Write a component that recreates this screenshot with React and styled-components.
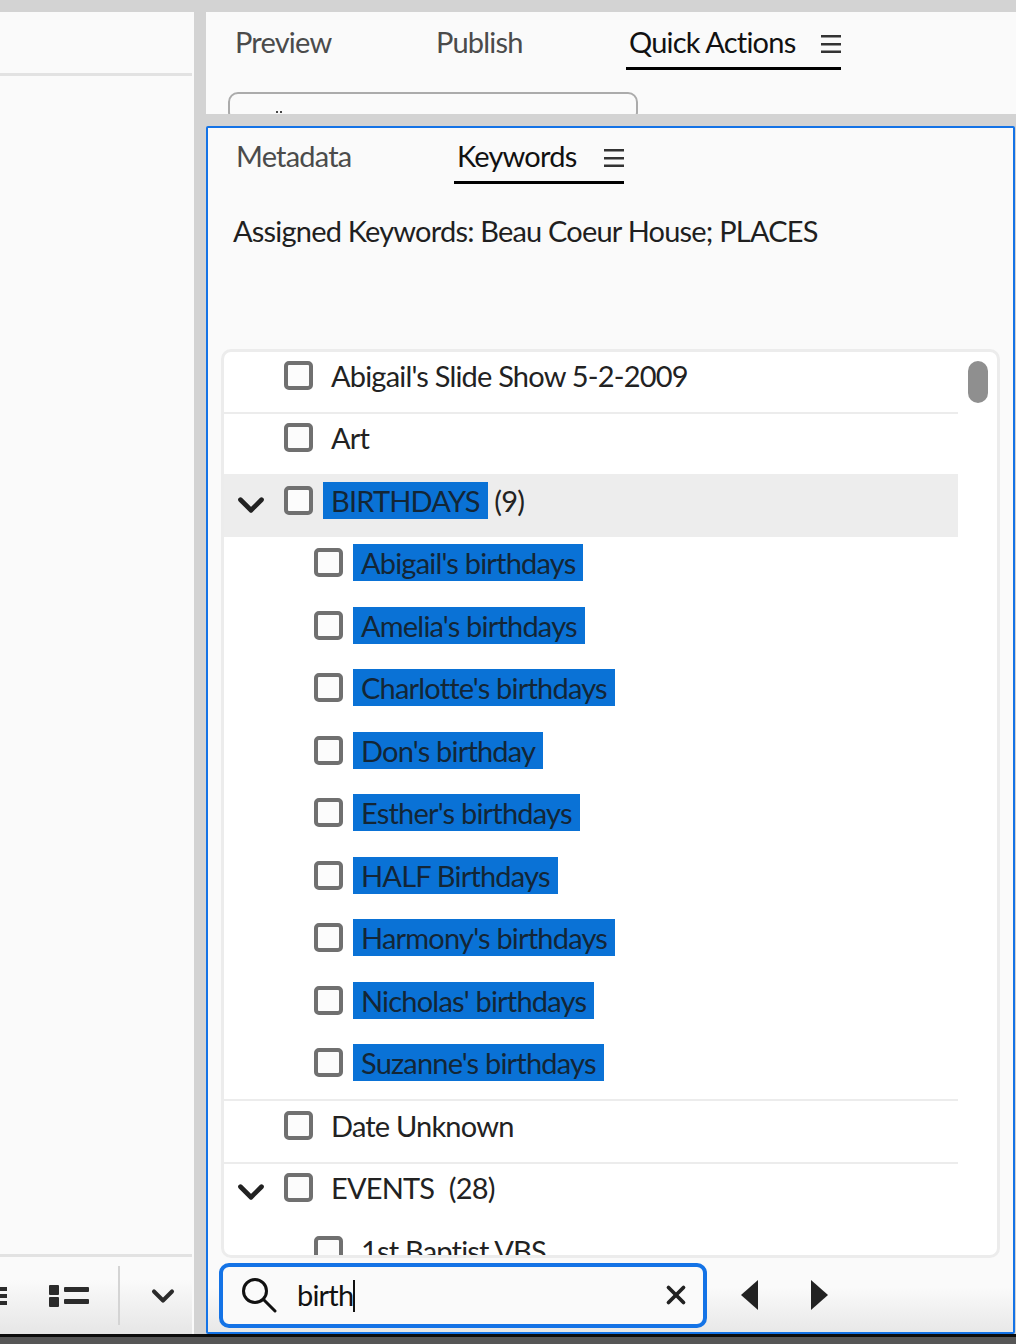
import styled, { createGlobalStyle } from "styled-components";
import { X, ChevronDown } from "lucide-react";

const Global = createGlobalStyle`
  html, body { margin: 0; padding: 0; height: 100%; overflow: hidden; }
  body { background: #d3d3d3; font-family: "Lato", "Noto Sans", sans-serif; letter-spacing: -0.8px; }
  * { box-sizing: border-box; }
`;

const Page = styled.div`
  width: 1016px;
  height: 1344px;
  display: flex;
  flex-direction: column;
  padding-top: 12px;
  overflow: hidden;
`;

const Columns = styled.div`
  height: 1322px;
  display: flex;
  gap: 12px;
`;

const LeftPanel = styled.div`
  width: 194px;
  display: flex;
  flex-direction: column;
  background: #fafafa;
`;

const LeftHeader = styled.div`
  height: 64px;
  margin-right: 2px;
  border-bottom: 3px solid #e2e2e2;
`;

const LeftBody = styled.div`
  flex: 1;
`;

const Toolbar = styled.div`
  height: 80px;
  margin-right: 2px;
  border-top: 3px solid #e2e2e2;
  background: linear-gradient(#fafafa 30%, #e6e6e6);
  display: flex;
  align-items: center;
  padding-left: 49px;
  position: relative;
`;

const CutIcon = styled.svg`
  position: absolute;
  left: 0;
  top: 29px;
`;

const ToolDivider = styled.div`
  width: 2px;
  height: 59px;
  margin: 0 25px 0 29px;
  background: #d4d4d4;
`;

const RightColumn = styled.div`
  flex: 1;
  display: flex;
  flex-direction: column;
  gap: 12px;
`;

const TopPanel = styled.div`
  height: 102px;
  background: #fafafa;
  overflow: hidden;
`;

const TabRow = styled.div`
  display: flex;
  align-items: flex-start;
  height: ${(p) => p.$height}px;
  padding-left: ${(p) => p.$left}px;
  padding-top: ${(p) => p.$top}px;
`;

const Tab = styled.div`
  width: ${(p) => p.$width}px;
  height: 100%;
  padding-left: ${(p) => (p.$active ? 3 : 0)}px;
  display: flex;
  justify-content: space-between;
  font-size: 29px;
  line-height: 36px;
  color: ${(p) => (p.$active ? "#111" : "#4b4b4b")};
  border-bottom: ${(p) => (p.$active ? "3px solid #000" : "none")};
`;

const MenuIcon = styled.svg`
  margin-top: 11px;
  flex: none;
`;

const ClippedBox = styled.div`
  position: relative;
  width: 410px;
  height: 30px;
  margin-left: 22px;
  margin-top: 22px;
  border: 2px solid #ababab;
  border-radius: 10px;
  &::after {
    content: "";
    position: absolute;
    left: 46px;
    top: 17px;
    width: 6px;
    height: 2px;
    background: repeating-linear-gradient(90deg, #444 0 2px, transparent 2px 4px);
  }
`;

const KeywordPanel = styled.div`
  flex: 1;
  position: relative;
  margin-right: 1px;
  border: 2px solid #1473e6;
  border-radius: 2px;
  background: #fafafa;
  display: flex;
  flex-direction: column;
`;

const Assigned = styled.div`
  height: 165px;
  padding: 29px 0 0 25px;
  font-size: 29px;
  line-height: 36px;
  color: #1f1f1f;
`;

const ListFrame = styled.div`
  position: relative;
  height: 909px;
  margin: 0 13px;
  border: 3px solid #ececec;
  border-radius: 10px;
  background: #fff;
  overflow: hidden;
`;

const Rows = styled.div`
  width: 734px;
  margin-top: -3px;
`;

const Row = styled.div`
  display: flex;
  align-items: center;
  height: 62.5px;
  padding-bottom: 10px;
  background: ${(p) => (p.$active ? "#ededed" : "transparent")};
  box-shadow: ${(p) => (p.$line ? "0 2px 0 #ececec" : "none")};
  font-size: 29px;
  color: #222;
`;

const Twisty = styled.div`
  width: ${(p) => (p.$child ? 90 : 60)}px;
  flex: none;
  display: flex;
  padding: 9px 0 0 6px;
`;

const Checkbox = styled.div`
  width: 29px;
  height: 29px;
  flex: none;
  border: 4px solid #707070;
  border-radius: 5px;
  background: #fcfcfc;
`;

const Label = styled.span`
  margin-left: 10px;
  padding: 0 8px;
  height: 37px;
  line-height: 37px;
  white-space: pre;
  background: ${(p) => (p.$hit ? "#0a72d6" : "transparent")};
  color: ${(p) => (p.$hit ? "#132636" : "#222")};
`;

const Count = styled.span`
  line-height: 37px;
  white-space: pre;
`;

const ScrollThumb = styled.div`
  position: absolute;
  top: 9px;
  right: 9px;
  width: 20px;
  height: 42px;
  border-radius: 10px;
  background: #8f8f8f;
`;

const Footer = styled.div`
  flex: 1;
  display: flex;
  align-items: center;
  padding: 0 11px;
  background: linear-gradient(#fafafa 40%, #e8e8e8);
`;

const SearchBox = styled.div`
  width: 488px;
  height: 65px;
  display: flex;
  align-items: center;
  padding: 0 12px 0 18px;
  border: 4px solid #1473e6;
  border-radius: 10px;
  background: #fafafa;
`;

const SearchText = styled.div`
  flex: 1;
  margin-left: 20px;
  font-size: 29px;
  line-height: 38px;
  color: #111;
`;

const Caret = styled.span`
  display: inline-block;
  width: 2px;
  height: 32px;
  vertical-align: -6px;
  background: #111;
`;

const ArrowButton = styled.svg`
  flex: none;
  margin-left: ${(p) => p.$gap}px;
`;

const BottomStrip = styled.div`
  flex: 1;
  background: #565656;
  border-top: 3px solid #0c0c0c;
`;

const Menu = () => (
  <MenuIcon width="20" height="18" viewBox="0 0 20 18" fill="#333">
    <rect y="0" width="20" height="2.5" />
    <rect y="8" width="20" height="2.5" />
    <rect y="15.5" width="20" height="2.5" />
  </MenuIcon>
);

const rows = [
  { name: "Abigail's Slide Show 5-2-2009", line: true },
  { name: "Art", line: true },
  { name: "BIRTHDAYS", count: " (9)", open: true, active: true, hit: true },
  { name: "Abigail's birthdays", child: true, hit: true },
  { name: "Amelia's birthdays", child: true, hit: true },
  { name: "Charlotte's birthdays", child: true, hit: true },
  { name: "Don's birthday", child: true, hit: true },
  { name: "Esther's birthdays", child: true, hit: true },
  { name: "HALF Birthdays", child: true, hit: true },
  { name: "Harmony's birthdays", child: true, hit: true },
  { name: "Nicholas' birthdays", child: true, hit: true },
  { name: "Suzanne's birthdays", child: true, hit: true, line: true },
  { name: "Date Unknown", line: true },
  { name: "EVENTS", count: " (28)", open: true },
  { name: "1st Baptist VBS", child: true },
];

export default function App() {
  return (
    <Page>
      <Global />
      <Columns>
        <LeftPanel>
          <LeftHeader />
          <LeftBody />
          <Toolbar>
            <CutIcon width="7" height="20" viewBox="0 0 7 20" fill="#2b2b2b">
              <rect y="1" width="7" height="4" />
              <rect y="8" width="7" height="4" />
              <rect y="15" width="7" height="4" />
            </CutIcon>
            <svg width="40" height="22" viewBox="0 0 40 22" fill="#2b2b2b">
              <rect x="0" y="0" width="10" height="10" rx="1" />
              <rect x="0" y="12" width="10" height="10" rx="1" />
              <rect x="15" y="2" width="25" height="5" rx="1" />
              <rect x="15" y="14" width="25" height="5" rx="1" />
            </svg>
            <ToolDivider />
            <ChevronDown size={36} strokeWidth={2.7} color="#2b2b2b" />
          </Toolbar>
        </LeftPanel>
        <RightColumn>
          <TopPanel>
            <TabRow $height={58} $left={29} $top={12}>
              <Tab $width={201}>Preview</Tab>
              <Tab $width={190}>Publish</Tab>
              <Tab $width={215} $active>
                Quick Actions
                <Menu />
              </Tab>
            </TabRow>
            <ClippedBox />
          </TopPanel>
          <KeywordPanel>
            <TabRow $height={56} $left={28} $top={10}>
              <Tab $width={218}>Metadata</Tab>
              <Tab $width={170} $active>
                Keywords
                <Menu />
              </Tab>
            </TabRow>
            <Assigned>Assigned Keywords: Beau Coeur House; PLACES</Assigned>
            <ListFrame>
              <Rows>
                {rows.map((r) => (
                  <Row key={r.name} $active={r.active} $line={r.line}>
                    <Twisty $child={r.child}>
                      {r.open && <ChevronDown size={42} strokeWidth={2.7} color="#222" />}
                    </Twisty>
                    <Checkbox />
                    <Label $hit={r.hit}>{r.name}</Label>
                    {r.count && <Count>{r.count}</Count>}
                  </Row>
                ))}
              </Rows>
              <ScrollThumb />
            </ListFrame>
            <Footer>
              <SearchBox>
                <svg width="36" height="36" viewBox="0 0 36 36" fill="none" stroke="#111" strokeWidth="3" strokeLinecap="round">
                  <circle cx="14" cy="14" r="11.5" />
                  <path d="M22.5 22.5 L34 34" />
                </svg>
                <SearchText>
                  birth
                  <Caret />
                </SearchText>
                <X size={30} strokeWidth={3} color="#222" />
              </SearchBox>
              <ArrowButton $gap={34} width="18" height="30" viewBox="0 0 18 30" fill="#222">
                <path d="M17 0 L0 15 L17 30 Z" />
              </ArrowButton>
              <ArrowButton $gap={51} width="18" height="30" viewBox="0 0 18 30" fill="#222">
                <path d="M1 0 L18 15 L1 30 Z" />
              </ArrowButton>
            </Footer>
          </KeywordPanel>
        </RightColumn>
      </Columns>
      <BottomStrip />
    </Page>
  );
}
